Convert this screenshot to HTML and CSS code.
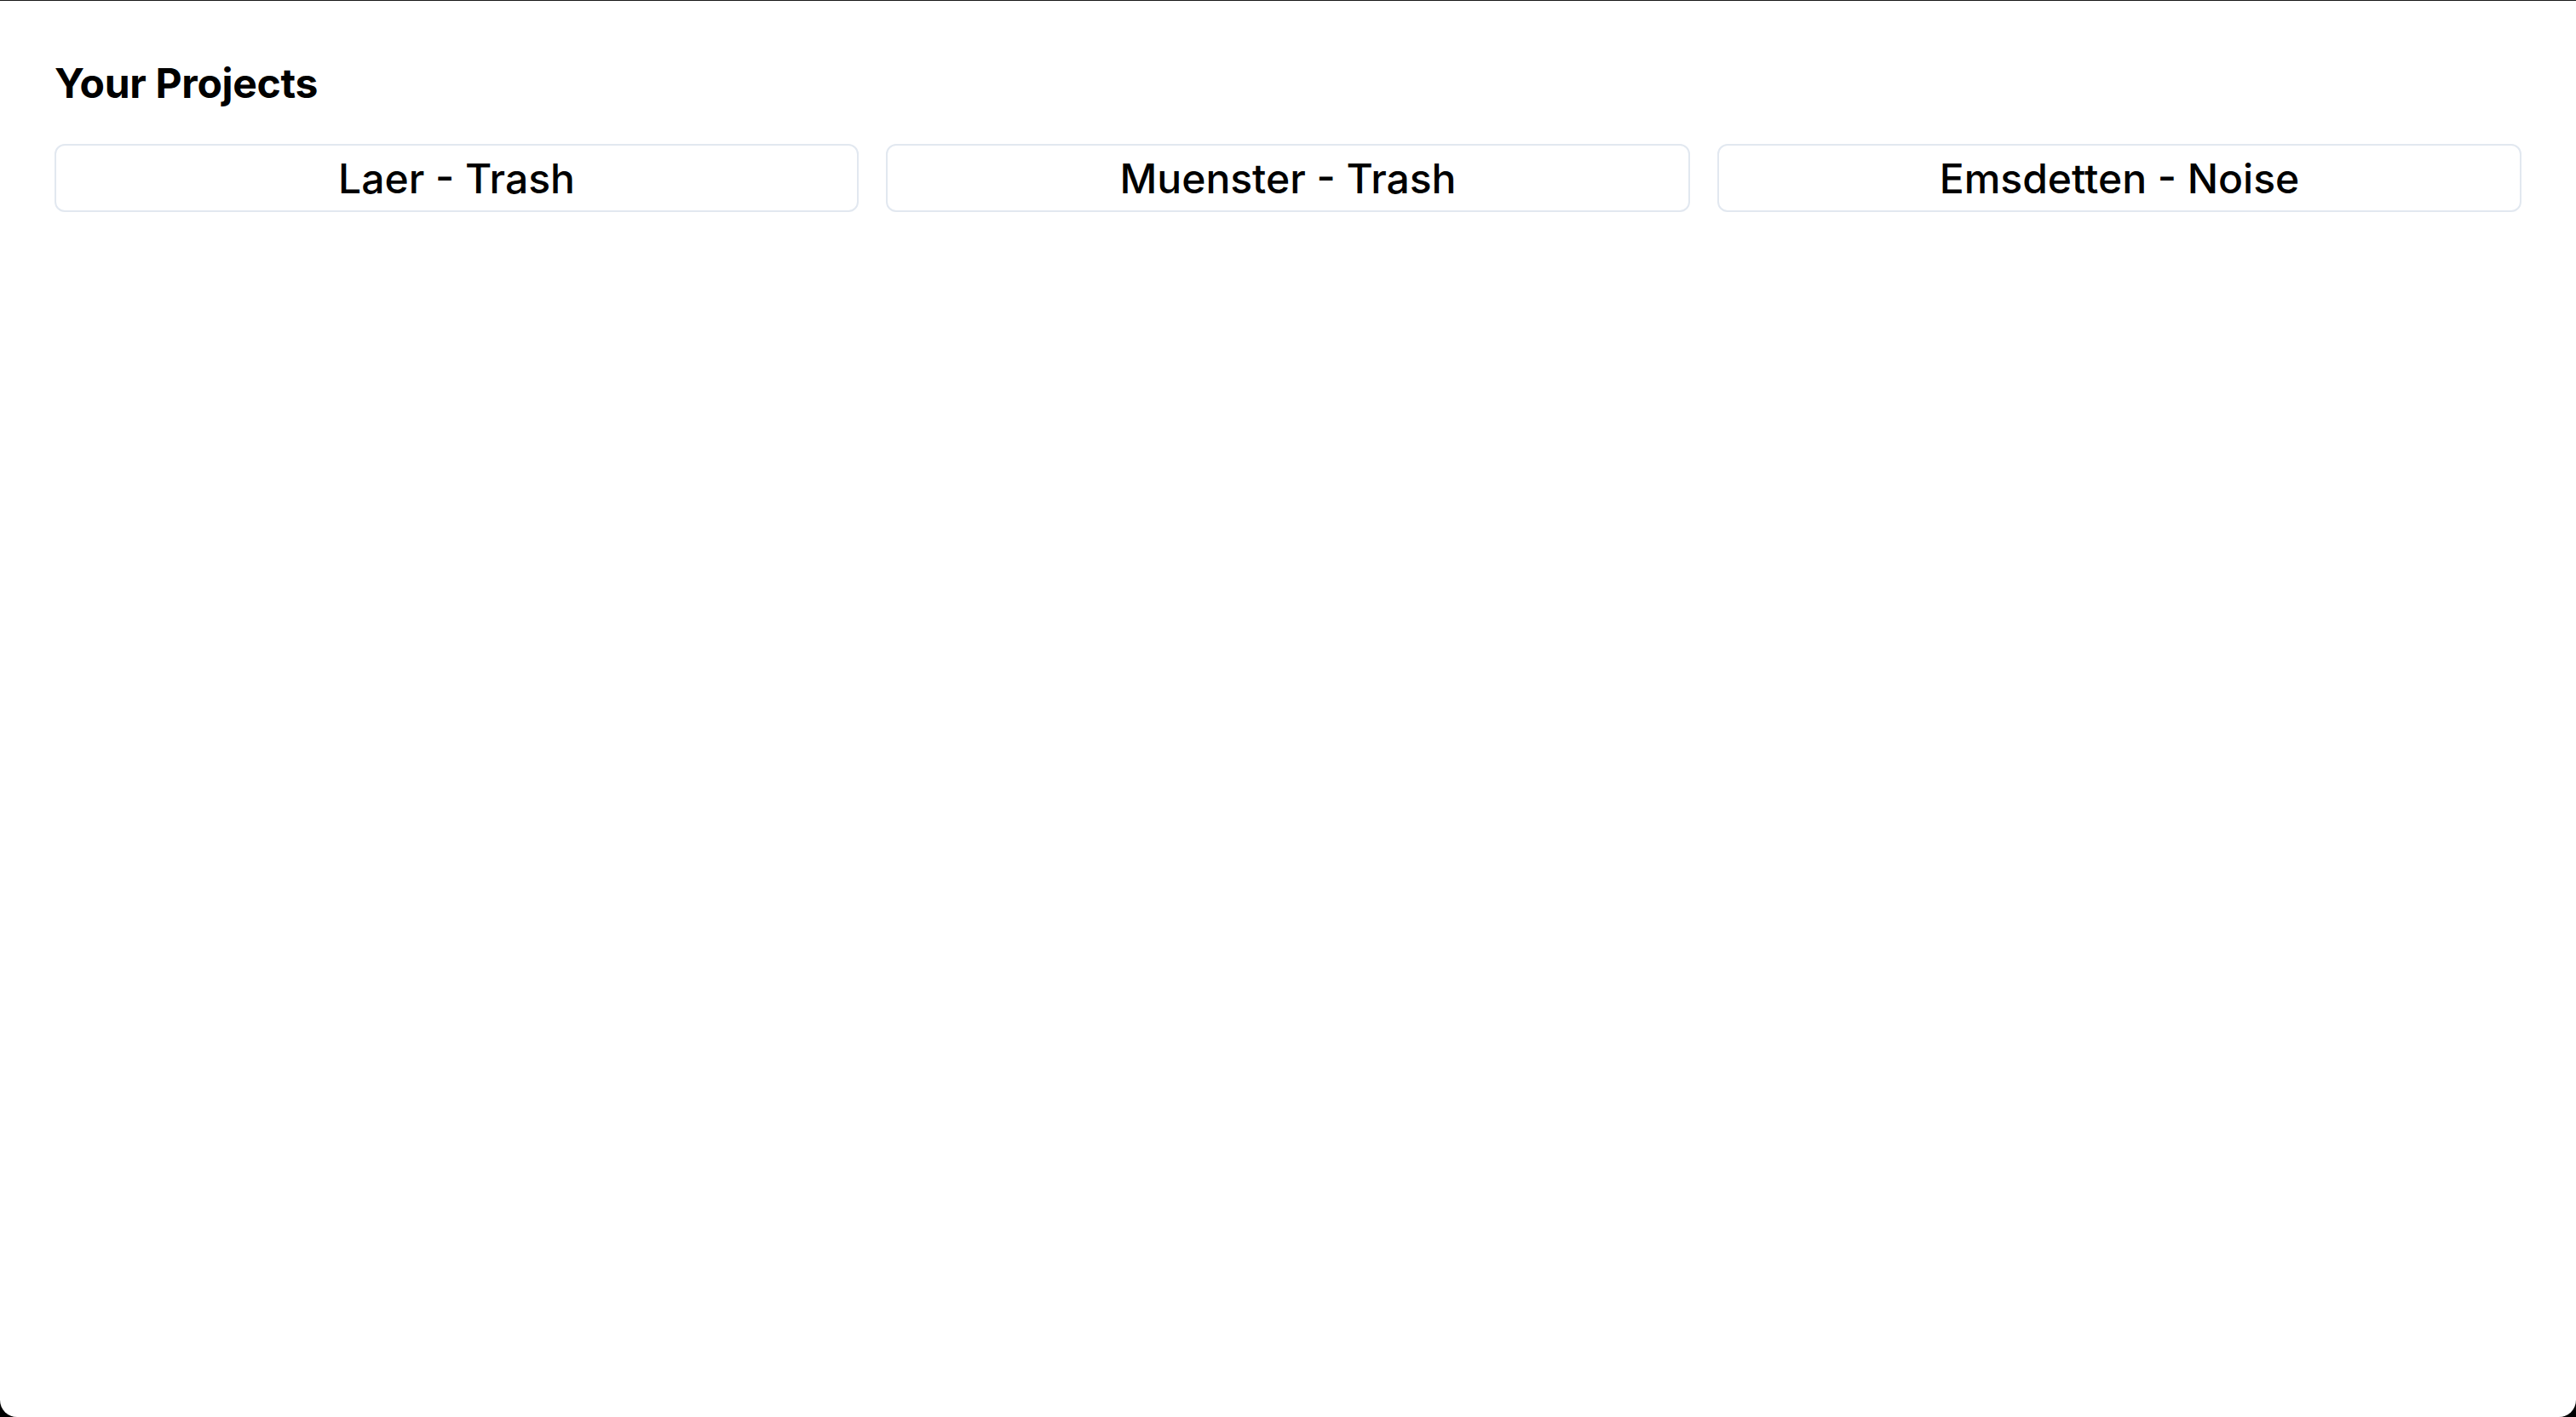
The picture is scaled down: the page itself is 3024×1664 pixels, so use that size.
FILE: index.html
```html
<!DOCTYPE html>
<html lang="en">
<head>
<meta charset="utf-8">
<title>Your Projects</title>
<link rel="stylesheet" href="styles.css">
</head>
<body>
<main class="page">
  <h1 class="title">Your Projects</h1>
  <div class="projects">
    <a class="project" href="#">Laer - Trash</a>
    <a class="project" href="#">Muenster - Trash</a>
    <a class="project" href="#">Emsdetten - Noise</a>
  </div>
</main>
</body>
</html>
```

FILE: styles.css
```css
html, body {
  margin: 0;
  padding: 0;
  height: 100%;
}
body {
  background: #000;
  font-family: Inter, "Noto Sans", sans-serif;
  color: #000;
}
.page {
  box-sizing: border-box;
  height: 1664px;
  background: #fff;
  border-top: 1px solid #1a1a1a;
  border-radius: 0 0 20px 20px;
  padding: 64px;
}
.title {
  margin: 0 0 38px;
  font-size: 48px;
  line-height: 66px;
  font-weight: 650;
  letter-spacing: -0.3px;
}
.projects {
  display: grid;
  grid-template-columns: repeat(3, 1fr);
  gap: 32px;
}
.project {
  display: flex;
  align-items: center;
  justify-content: center;
  height: 80px;
  box-sizing: border-box;
  border: 2px solid #e2e8f0;
  border-radius: 12px;
  padding-top: 2px;
  font-size: 48px;
  line-height: 72px;
  font-weight: 500;
  color: #000;
  text-decoration: none;
}
```
